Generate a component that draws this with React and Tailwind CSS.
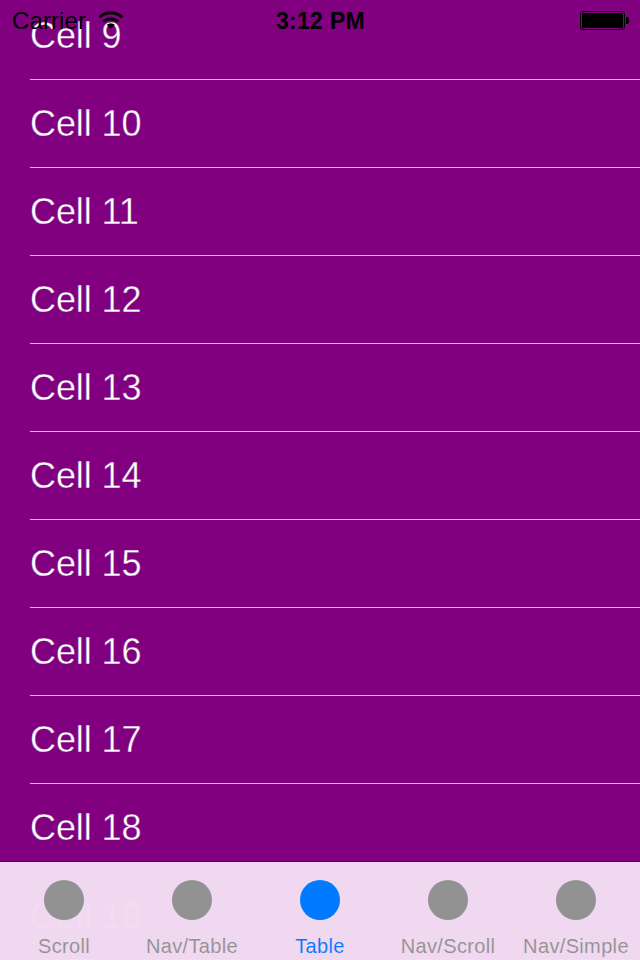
const cells = Array.from({ length: 11 }, (_, i) => i + 9);
const tabs = ["Scroll", "Nav/Table", "Table", "Nav/Scroll", "Nav/Simple"];

function StatusBar() {
  return (
    <header className="absolute inset-x-0 top-0 grid h-10 grid-cols-3 items-center pl-3 pr-[11px] text-black">
      <div className="flex items-center">
        <span className="w-[75px] pt-[2px] text-[24px] leading-[38px] tracking-[0.1px] whitespace-nowrap">Carrier</span>
        <svg className="ml-[11px]" width="26" height="20" viewBox="0 0 26 20" fill="none" stroke="#000" strokeWidth="2.9">
          <path d="M1.5 7.2A16.4 16.4 0 0 1 24.1 7.2" />
          <path d="M5.4 11.8A10.8 10.8 0 0 1 20.2 11.8" />
          <path d="M8.7 14.8Q12.8 11.8 16.9 14.8L12.8 19Z" fill="#000" stroke="none" />
        </svg>
      </div>
      <span className="pt-[2px] text-center text-[23px] leading-[38px] font-bold tracking-[0.3px] whitespace-nowrap">3:12 PM</span>
      <svg className="justify-self-end" width="49" height="20" viewBox="0 0 49 20">
        <rect x=".5" y="1.5" width="44" height="18" rx="2.5" fill="none" stroke="#000" />
        <rect x="2" y="3" width="41" height="15" rx="1" />
        <path d="M46 7h1.5Q49 7 49 9v3Q49 14 47.5 14H46Z" />
      </svg>
    </header>
  );
}

function TabBar() {
  return (
    <nav className="absolute inset-x-0 bottom-0 grid h-[99px] grid-cols-5 border-t border-[#590059] bg-[#f2dbf2]/[.985] bg-clip-padding">
      {tabs.map((tab) => (
        <div key={tab} className={`flex flex-col items-center pt-[18px] ${tab === "Table" ? "text-[#007aff]" : "text-[#929292]"}`}>
          <span className="size-10 rounded-full bg-current" />
          <span className="mt-[14px] text-[20px] leading-6 tracking-[0.35px] whitespace-nowrap [-webkit-text-stroke:0.1px_#f0d8f0]">{tab}</span>
        </div>
      ))}
    </nav>
  );
}

export default function App() {
  return (
    <div className="relative h-[960px] w-[640px] overflow-hidden bg-[#800080] font-['Liberation_Sans',Arial,sans-serif]">
      <main className="-mt-2">
        {cells.map((n) => (
          <div key={n} className="ml-[30px] flex h-[88px] items-center border-b border-[#dfb8df] text-[36px] leading-[44px] tracking-[-0.1px] text-white">
            <span className="[-webkit-text-stroke:0.35px_#800080]">Cell {n}</span>
          </div>
        ))}
      </main>
      <StatusBar />
      <TabBar />
    </div>
  );
}
